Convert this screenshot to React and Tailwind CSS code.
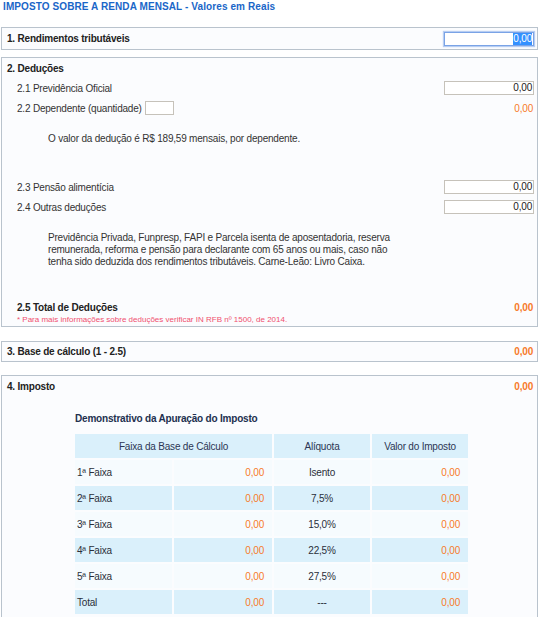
import React from "react";

const Input = ({ focused }) => (
  <div
    className={
      "w-[90px] h-[14px] bg-white flex items-center justify-end pr-[1px] text-[10px] leading-[12px] text-[#222] " +
      (focused
        ? "border border-[#7aa3e6] shadow-[0_0_1px_1px_#b7cdf2]"
        : "border border-[#c6c2ba]")
    }
  >
    {focused ? (
      <span className="bg-[#3390ff] text-white">0,00</span>
    ) : (
      <span>0,00</span>
    )}
  </div>
);

const Row = ({ label, right }) => (
  <div className="h-[20px] flex items-center pl-[15px] pr-[3px] justify-between">
    <div className="flex items-center gap-[2px]">{label}</div>
    {right}
  </div>
);

const rows = [
  ["1ª Faixa", "Isento"],
  ["2ª Faixa", "7,5%"],
  ["3ª Faixa", "15,0%"],
  ["4ª Faixa", "22,5%"],
  ["5ª Faixa", "27,5%"],
  ["Total", "---"],
];

export default function App() {
  return (
    <div className="w-[541px] h-[617px] overflow-hidden bg-white font-['Liberation_Sans',Arial,sans-serif] text-[10px] tracking-[-0.2px] text-[#333]">
      <div className="pl-[3px] h-[13px] leading-[13px] text-[#1a66c8] font-bold text-[10px] tracking-[0.1px]">
        IMPOSTO SOBRE A RENDA MENSAL - Valores em Reais
      </div>

      {/* Box 1 */}
      <div className="mt-[14px] ml-[1px] w-[537px] border border-[#b9c3cd] bg-[#fbfcfe] h-[23px] flex items-center justify-between pl-[5px] pr-[3px]">
        <span className="font-bold text-[#222]">1. Rendimentos tributáveis</span>
        <Input focused />
      </div>

      {/* Box 2 */}
      <div className="mt-[7px] ml-[1px] w-[537px] border border-[#b9c3cd] bg-[#fbfcfe] h-[270px]">
        <div className="h-[20px] flex items-center pl-[5px]">
          <span className="font-bold text-[#222]">2. Deduções</span>
        </div>
        <Row label={<span>2.1 Previdência Oficial</span>} right={<Input />} />
        <Row
          label={
            <>
              <span>2.2 Dependente (quantidade)</span>
              <div className="w-[29px] h-[14px] border border-[#c6c2ba] bg-white ml-[1px]" />
            </>
          }
          right={<span className="text-[#f77a2a] pr-[1px]">0,00</span>}
        />
        <div className="mt-[14px] h-[13px] leading-[13px] pl-[46px]">
          O valor da dedução é R$ 189,59 mensais, por dependente.
        </div>
        <div className="h-[32px]" />
        <Row label={<span>2.3 Pensão alimentícia</span>} right={<Input />} />
        <Row label={<span>2.4 Outras deduções</span>} right={<Input />} />
        <div className="mt-[15px] pl-[46px] leading-[12px] whitespace-nowrap">
          Previdência Privada, Funpresp, FAPI e Parcela isenta de aposentadoria, reserva
          <br />
          remunerada, reforma e pensão para declarante com 65 anos ou mais, caso não
          <br />
          tenha sido deduzida dos rendimentos tributáveis. Carne-Leão: Livro Caixa.
        </div>
        <div className="mt-[33px] h-[13px] flex items-center justify-between pl-[15px] pr-[4px]">
          <span className="font-bold text-[#222]">2.5 Total de Deduções</span>
          <span className="font-bold text-[#f77a2a]">0,00</span>
        </div>
        <div className="h-[11px] leading-[11px] pl-[15px] text-[8px] tracking-[0px] text-[#f0506e]">
          * Para mais informações sobre deduções verificar IN RFB nº 1500, de 2014.
        </div>
      </div>

      {/* Box 3 */}
      <div className="mt-[14px] ml-[1px] w-[537px] border border-[#b9c3cd] bg-[#fbfcfe] h-[21px] flex items-center justify-between pl-[5px] pr-[4px]">
        <span className="font-bold text-[#222]">3. Base de cálculo (1 - 2.5)</span>
        <span className="font-bold text-[#f77a2a]">0,00</span>
      </div>

      {/* Box 4 */}
      <div className="mt-[13px] ml-[1px] w-[537px] border border-[#b9c3cd] bg-[#fbfcfe] h-[260px]">
        <div className="h-[20px] flex items-center justify-between pl-[5px] pr-[4px]">
          <span className="font-bold text-[#222]">4. Imposto</span>
          <span className="font-bold text-[#f77a2a]">0,00</span>
        </div>
        <div className="mt-[16px] pl-[73px] h-[13px] leading-[13px] font-bold text-[#22304f]">
          Demonstrativo da Apuração do Imposto
        </div>
        <div className="mt-[9px] ml-[73px] w-[393px] grid grid-cols-[97px_98px_96px_96px] gap-[2px]">
          <div className="col-span-2 h-[24px] bg-[#daf0fb] flex items-center justify-center text-[#2c3654]">
            Faixa da Base de Cálculo
          </div>
          <div className="h-[24px] bg-[#daf0fb] flex items-center justify-center text-[#2c3654]">
            Alíquota
          </div>
          <div className="h-[24px] bg-[#daf0fb] flex items-center justify-center text-[#2c3654]">
            Valor do Imposto
          </div>
          {rows.map(([label, rate], i) => {
            const bg = i % 2 === 0 ? "bg-[#f6fbfe]" : "bg-[#daf0fb]";
            return (
              <React.Fragment key={label}>
                <div className={"h-[24px] flex items-center pl-[2px] text-[#2a2f3a] " + bg}>{label}</div>
                <div className={"h-[24px] flex items-center justify-end pr-[8px] text-[#f77a2a] " + bg}>0,00</div>
                <div className={"h-[24px] flex items-center justify-center text-[#2a2f3a] " + bg}>{rate}</div>
                <div className={"h-[24px] flex items-center justify-end pr-[8px] text-[#f77a2a] " + bg}>0,00</div>
              </React.Fragment>
            );
          })}
        </div>
      </div>
    </div>
  );
}
